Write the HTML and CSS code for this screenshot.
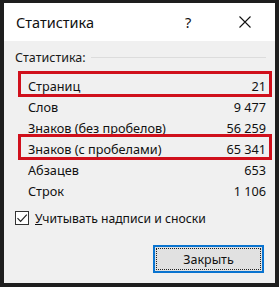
FILE: index.html
```html
<!DOCTYPE html>
<html lang="ru">
<head>
<meta charset="utf-8">
<link rel="stylesheet" href="styles.css">
</head>
<body>
<div class="dialog">
  <div class="titlebar">
    <span class="title">Статистика</span>
    <span class="help">?</span>
    <span class="close">
      <svg width="12" height="12" viewBox="0 0 12 12"><path d="M0.5 0.5 L11.5 11.5 M11.5 0.5 L0.5 11.5" stroke="#111" stroke-width="1.1" fill="none"/></svg>
    </span>
  </div>
  <div class="body">
    <div class="group-head">
      <span class="group-label">Статистика:</span>
      <span class="group-line"></span>
    </div>
    <div class="rows">
      <div class="row marked"><span>Страниц</span><span>21</span></div>
      <div class="row"><span>Слов</span><span>9 477</span></div>
      <div class="row"><span>Знаков (без пробелов)</span><span>56 259</span></div>
      <div class="row marked"><span>Знаков (с пробелами)</span><span>65 341</span></div>
      <div class="row"><span>Абзацев</span><span>653</span></div>
      <div class="row"><span>Строк</span><span>1 106</span></div>
    </div>
    <label class="check">
      <span class="box">
        <svg width="12" height="12" viewBox="0 0 12 12"><path d="M1.5 6.2 L4.6 9.3 L10.8 2.6" stroke="#222" stroke-width="1.2" fill="none"/></svg>
      </span>
      <span class="check-text"><u>У</u>читывать надписи и сноски</span>
    </label>
    <div class="actions">
      <button class="btn"><span class="btn-inner">Закрыть</span></button>
    </div>
  </div>
</div>
</body>
</html>
```
FILE: styles.css
```css
html, body {
  margin: 0;
  padding: 0;
  background: #1e1e1e;
}
body {
  width: 279px;
  height: 287px;
  overflow: hidden;
  font-family: "Noto Sans", "Open Sans", sans-serif;
  color: #111;
}
.dialog {
  margin: 3px 4px 0 4px;
  width: 271px;
  height: 280px;
  background: #f0f0f0;
  display: flex;
  flex-direction: column;
}
.titlebar {
  flex-shrink: 0;
  height: 38px;
  background: #ffffff;
  display: flex;
  align-items: center;
  font-size: 14.5px;
}
.title {
  margin-left: 12px;
  flex: 1;
  color: #111;
}
.help {
  width: 14px;
  margin-right: 40px;
  color: #111;
}
.close {
  display: flex;
  margin-right: 24px;
}
.body {
  flex-shrink: 0;
  padding: 8px 0 0 0;
  font-size: 12.5px;
  display: flex;
  flex-direction: column;
}
.group-head {
  display: flex;
  align-items: center;
  padding-left: 11px;
  height: 17px;
}
.group-label {
  color: #1a1a1a;
}
.group-line {
  flex: 1;
  height: 1px;
  background: #dcdcdc;
  margin: 0 9px 0 5px;
}
.rows {
  margin: 9px 3px 0 14px;
  display: flex;
  flex-direction: column;
  font-size: 12.7px;
}
.row {
  position: relative;
  height: 21px;
  display: flex;
  align-items: center;
  justify-content: space-between;
  padding: 0 6px 0 10px;
}
.row.marked::before {
  content: "";
  position: absolute;
  top: -4px;
  bottom: -1px;
  left: 0;
  right: 0;
  border: 3px solid #d0101c;
}
.check {
  display: flex;
  align-items: center;
  margin: 9px 0 0 11px;
  height: 16px;
  font-size: 12.2px;
}
.box {
  width: 12px;
  height: 12px;
  border: 1px solid #333;
  background: #fff;
  display: flex;
  align-items: center;
  justify-content: center;
}
.check-text {
  margin-left: 6px;
}
.actions {
  display: flex;
  justify-content: flex-end;
  margin-top: 19px;
  padding-right: 11px;
}
.btn {
  width: 111px;
  height: 28px;
  border: 2px solid #0a74d0;
  background: #e1e1e1;
  padding: 1px;
  font-family: inherit;
  font-size: 12.5px;
  color: #111;
  display: flex;
}
.btn-inner {
  flex: 1;
  border: 1px dotted #222;
  display: flex;
  align-items: center;
  justify-content: center;
}
```
